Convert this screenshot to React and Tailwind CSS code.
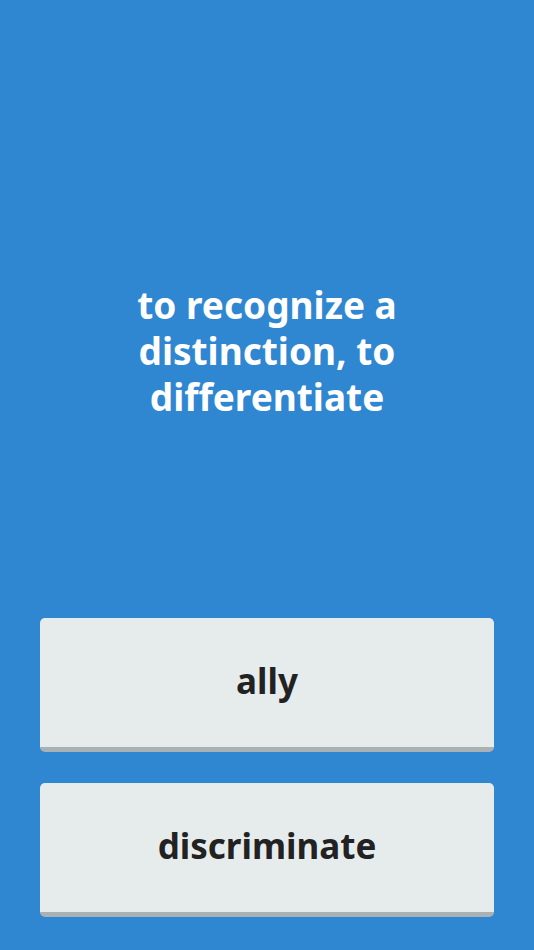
export default function App() {
  const answers = ["ally", "discriminate"];
  return (
    <div
      className="w-full min-h-screen bg-[#2f86d1] flex flex-col"
      style={{ fontFamily: '"Noto Sans", "Open Sans", sans-serif' }}
    >
      <div className="h-[618px] pt-[84px] flex items-center justify-center px-10">
        <h1 className="text-white font-bold text-[37px] leading-[46px] text-center w-[300px]">
          to recognize a distinction, to differentiate
        </h1>
      </div>
      <div className="flex flex-col gap-[31px] px-10 pb-[33px]">
        {answers.map((a) => (
          <button
            key={a}
            className="h-[134px] w-full rounded-[5px] bg-[#e6ecec] border-b-[5px] border-[#aab1b5] flex items-center justify-center pb-[2px] text-[#222222] font-bold text-[35px]"
          >
            {a}
          </button>
        ))}
      </div>
    </div>
  );
}
